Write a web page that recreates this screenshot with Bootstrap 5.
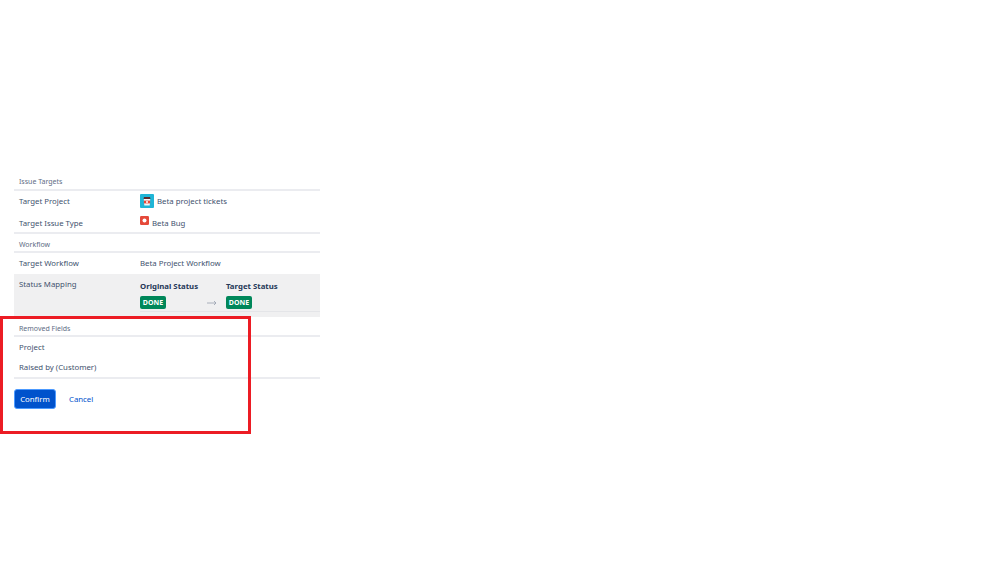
<!DOCTYPE html>
<html lang="en">
<head>
<meta charset="utf-8">
<title>Move issue</title>
<link rel="stylesheet" href="https://cdn.jsdelivr.net/npm/bootstrap@5.3.0/dist/css/bootstrap.min.css">
<style>
html,body{height:100%;background:#fff;}
body{font-family:"Noto Sans","Open Sans","Liberation Sans",sans-serif;font-size:7.8px;line-height:12px;color:#42526e;position:relative;overflow:hidden;}
.sheet{width:306px;margin-left:14px;padding-top:176px;}
.sect{height:15px;padding-left:5px;border-bottom:2px solid #ebecf0;font-size:7px;line-height:12px;color:#5e6c84;}
.sect-wf{height:19px;padding-top:5px;}
.sect-rm{height:20px;padding-top:6px;}
.rowline{display:flex;padding-left:5px;color:#42526e;}
.lbl{width:121px;flex:none;}
.r-project{height:22px;padding-top:4px;}
.r-type{height:21px;padding-top:4px;border-bottom:2px solid #ebecf0;}
.r-wf{height:21px;padding-top:4px;}
.r-map{height:43px;background:#f0f0f1;padding-top:4px;}
.prj-ico{width:14px;height:14px;margin-top:-1px;margin-right:3px;}
.bug-ico{width:9px;height:9px;margin-right:3px;margin-top:-1px;}
.heads{flex:1;display:grid;grid-template-columns:66px 20px auto;row-gap:4px;align-items:center;margin-top:2px;padding-bottom:2px;border-bottom:1px solid #e4e5e8;height:32px;}
.heads b{font-weight:700;color:#253858;}
.done{display:block;width:26px;text-align:center;background:#00875a;color:#fff;font-size:7px;font-weight:700;line-height:13px;height:13px;border-radius:2px;}
.arrow{width:10px;height:6px;margin-left:1px;}
.r-plain{height:21px;padding-top:4px;}
.r-last{height:21px;padding-top:3px;border-bottom:2px solid #ebecf0;}
.actions{margin-top:10px;}
.go{height:20px;width:42px;padding:0;background:#0052cc;color:#fff;font-size:7.8px;line-height:18px;border:1px solid #4c9aff;border-radius:3px;}
.drop{color:#0052cc;text-decoration:none;margin-left:13px;}
.callout{position:absolute;left:0;top:316px;width:251px;height:118px;border:3px solid #ec1c24;pointer-events:none;}
</style>
</head>
<body>
<main class="sheet">
  <div class="sect">Issue Targets</div>
  <div class="rowline r-project">
    <div class="lbl">Target Project</div>
    <div class="d-flex">
      <svg class="prj-ico" viewBox="0 0 14 14" aria-hidden="true"><rect width="14" height="14" rx="1" fill="#1fb5d6"/><path d="M4 3h6l.5 2h-7z" fill="#5e2b2b"/><path d="M3.8 5h6.4l-.5 6.5H4.3z" fill="#f4f5f7"/><path d="M3.9 6.6h6.2v2.8H3.9z" fill="#e5493a"/><circle cx="7" cy="8" r="1" fill="#fff"/></svg>
      <span>Beta project tickets</span>
    </div>
  </div>
  <div class="rowline r-type">
    <div class="lbl">Target Issue Type</div>
    <div class="d-flex">
      <svg class="bug-ico" viewBox="0 0 9 9" aria-hidden="true"><rect width="9" height="9" rx="1.2" fill="#e5493a"/><circle cx="4.5" cy="4.5" r="2" fill="#fff"/></svg>
      <span>Beta Bug</span>
    </div>
  </div>
  <div class="sect sect-wf">Workflow</div>
  <div class="rowline r-wf">
    <div class="lbl">Target Workflow</div>
    <div>Beta Project Workflow</div>
  </div>
  <div class="rowline r-map">
    <div class="lbl">Status Mapping</div>
    <div class="heads">
      <b>Original Status</b><span></span><b>Target Status</b>
      <span class="done">DONE</span>
      <svg class="arrow" viewBox="0 0 10 6" aria-hidden="true"><path d="M0 3h9M7 1l2 2-2 2" fill="none" stroke="#97a0af" stroke-width=".8"/></svg>
      <span class="done">DONE</span>
    </div>
  </div>
  <div class="sect sect-rm">Removed Fields</div>
  <div class="rowline r-plain"><div class="lbl">Project</div></div>
  <div class="rowline r-last"><div class="lbl">Raised by (Customer)</div></div>
  <div class="actions d-flex align-items-center">
    <button type="button" class="btn go">Confirm</button>
    <a href="#" class="drop">Cancel</a>
  </div>
</main>
<div class="callout"></div>
<script src="https://cdn.jsdelivr.net/npm/bootstrap@5.3.0/dist/js/bootstrap.bundle.min.js"></script>
</body>
</html>
